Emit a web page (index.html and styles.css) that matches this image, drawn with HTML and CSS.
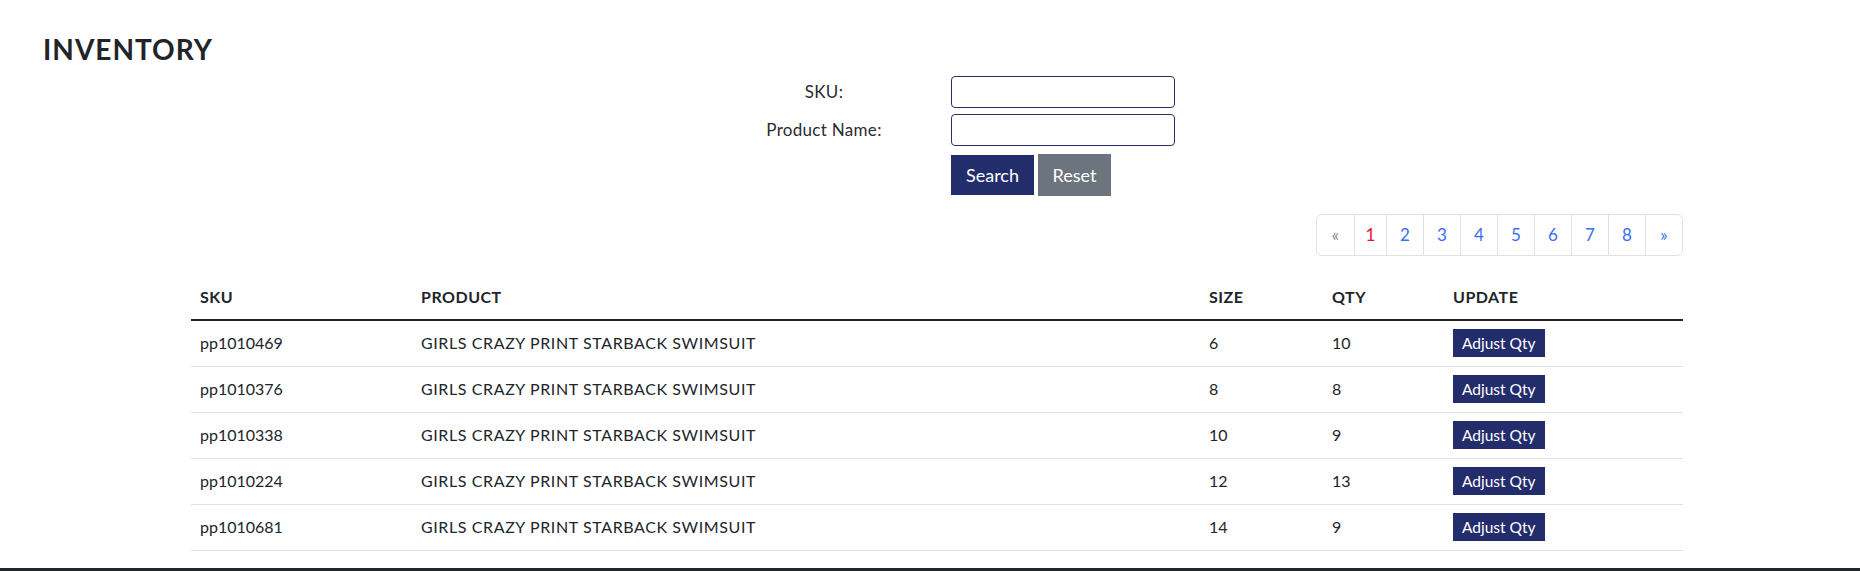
FILE: index.html
```html
<!DOCTYPE html>
<html lang="en">
<head>
<meta charset="utf-8">
<title>Inventory</title>
<link rel="stylesheet" href="styles.css">
</head>
<body>
<main class="page">
  <h2 class="title">INVENTORY</h2>

  <form class="search-form">
    <label class="form-label" for="sku">SKU:</label>
    <input class="form-input" id="sku" type="text">
    <label class="form-label" for="pname">Product Name:</label>
    <input class="form-input" id="pname" type="text">
    <span></span>
    <div class="form-actions">
      <button type="button" class="btn btn-primary">Search</button>
      <button type="button" class="btn btn-secondary">Reset</button>
    </div>
  </form>

  <div class="content">
    <nav class="pager-wrap">
      <ul class="pager">
        <li class="pager-item prev">&laquo;</li>
        <li class="pager-item active">1</li>
        <li class="pager-item">2</li>
        <li class="pager-item">3</li>
        <li class="pager-item">4</li>
        <li class="pager-item">5</li>
        <li class="pager-item">6</li>
        <li class="pager-item">7</li>
        <li class="pager-item">8</li>
        <li class="pager-item">&raquo;</li>
      </ul>
    </nav>

    <table class="inv-table">
      <colgroup>
        <col class="c-sku"><col class="c-prod"><col class="c-size"><col class="c-qty"><col class="c-upd">
      </colgroup>
      <thead>
        <tr><th>SKU</th><th>PRODUCT</th><th>SIZE</th><th>QTY</th><th>UPDATE</th></tr>
      </thead>
      <tbody>
        <tr><td>pp1010469</td><td class="prod">GIRLS CRAZY PRINT STARBACK SWIMSUIT</td><td>6</td><td>10</td><td><span class="adj-btn">Adjust Qty</span></td></tr>
        <tr><td>pp1010376</td><td class="prod">GIRLS CRAZY PRINT STARBACK SWIMSUIT</td><td>8</td><td>8</td><td><span class="adj-btn">Adjust Qty</span></td></tr>
        <tr><td>pp1010338</td><td class="prod">GIRLS CRAZY PRINT STARBACK SWIMSUIT</td><td>10</td><td>9</td><td><span class="adj-btn">Adjust Qty</span></td></tr>
        <tr><td>pp1010224</td><td class="prod">GIRLS CRAZY PRINT STARBACK SWIMSUIT</td><td>12</td><td>13</td><td><span class="adj-btn">Adjust Qty</span></td></tr>
        <tr><td>pp1010681</td><td class="prod">GIRLS CRAZY PRINT STARBACK SWIMSUIT</td><td>14</td><td>9</td><td><span class="adj-btn">Adjust Qty</span></td></tr>
      </tbody>
    </table>
  </div>
</main>
<footer class="footer"></footer>
</body>
</html>
```

FILE: styles.css
```css
* { box-sizing: border-box; }

html, body {
  margin: 0;
  padding: 0;
  background: #ffffff;
  color: #212529;
  font-family: Lato, "Noto Sans", "Liberation Sans", sans-serif;
  font-size: 16px;
  line-height: 1.5;
}

.page {
  padding-top: 31px;
}

.title {
  margin: 0;
  padding-left: 43px;
  font-size: 28px;
  font-weight: 700;
  letter-spacing: 1px;
  line-height: 36px;
  color: #212529;
}

.search-form {
  display: grid;
  grid-template-columns: 180px 224px;
  column-gap: 37px;
  row-gap: 6px;
  align-items: center;
  margin-left: 734px;
  margin-top: 9px;
}

.form-label {
  text-align: center;
  font-size: 17px;
  letter-spacing: 0.3px;
  color: #2b2b33;
}

.form-input {
  height: 32px;
  width: 224px;
  border: 1px solid #28306c;
  border-radius: 4px;
  background: #fff;
  padding: 0 8px;
  font: inherit;
}

.form-actions {
  display: flex;
  gap: 4px;
  margin-top: 2px;
  align-items: center;
}

.btn {
  font-family: inherit;
  font-size: 18px;
  line-height: 24px;
  color: #fff;
  border: 0;
  border-radius: 0;
  padding: 0;
  cursor: pointer;
}

.btn-primary {
  background: #242d6c;
  height: 40px;
  width: 83px;
}

.btn-secondary {
  background: #6c757d;
  height: 42px;
  width: 73px;
}

.content {
  width: 1492px;
  margin-left: 191px;
}

.pager-wrap {
  display: flex;
  justify-content: flex-end;
  margin-top: 18px;
}

.pager {
  display: flex;
  list-style: none;
  margin: 0;
  padding: 0;
  border: 1px solid #dee2e6;
  border-radius: 6px;
  height: 42px;
}

.pager-item {
  width: 37px;
  display: flex;
  align-items: center;
  justify-content: center;
  color: #3a6df4;
  font-size: 17px;
  border-left: 1px solid #dee2e6;
}

.pager-item:first-child { border-left: 0; }
.pager-item.prev { color: #8a8580; }
.pager-item.active { color: #e8132f; width: 32px; }

.inv-table {
  width: 100%;
  border-collapse: collapse;
  margin-top: 18px;
}

.c-sku { width: 221px; }
.c-prod { width: 788px; }
.c-size { width: 123px; }
.c-qty { width: 121px; }
.c-upd { width: 239px; }

.inv-table th {
  text-align: left;
  font-weight: 700;
  font-size: 16px;
  letter-spacing: 0.5px;
  height: 46px;
  padding: 0 9px;
  vertical-align: middle;
  border-bottom: 2px solid #212529;
}

.inv-table td {
  height: 46px;
  padding: 0 9px;
  vertical-align: middle;
  border-bottom: 1px solid #dee2e6;
  font-size: 16px;
  color: #212529;
}

.inv-table td.prod {
  letter-spacing: 0.6px;
}

.adj-btn {
  display: inline-block;
  background: #242d6c;
  color: #fff;
  font-size: 15.5px;
  height: 28px;
  line-height: 28px;
  padding: 0 9px;
}

.footer {
  height: 3px;
  margin-top: 17px;
  background: #212529;
}
```
